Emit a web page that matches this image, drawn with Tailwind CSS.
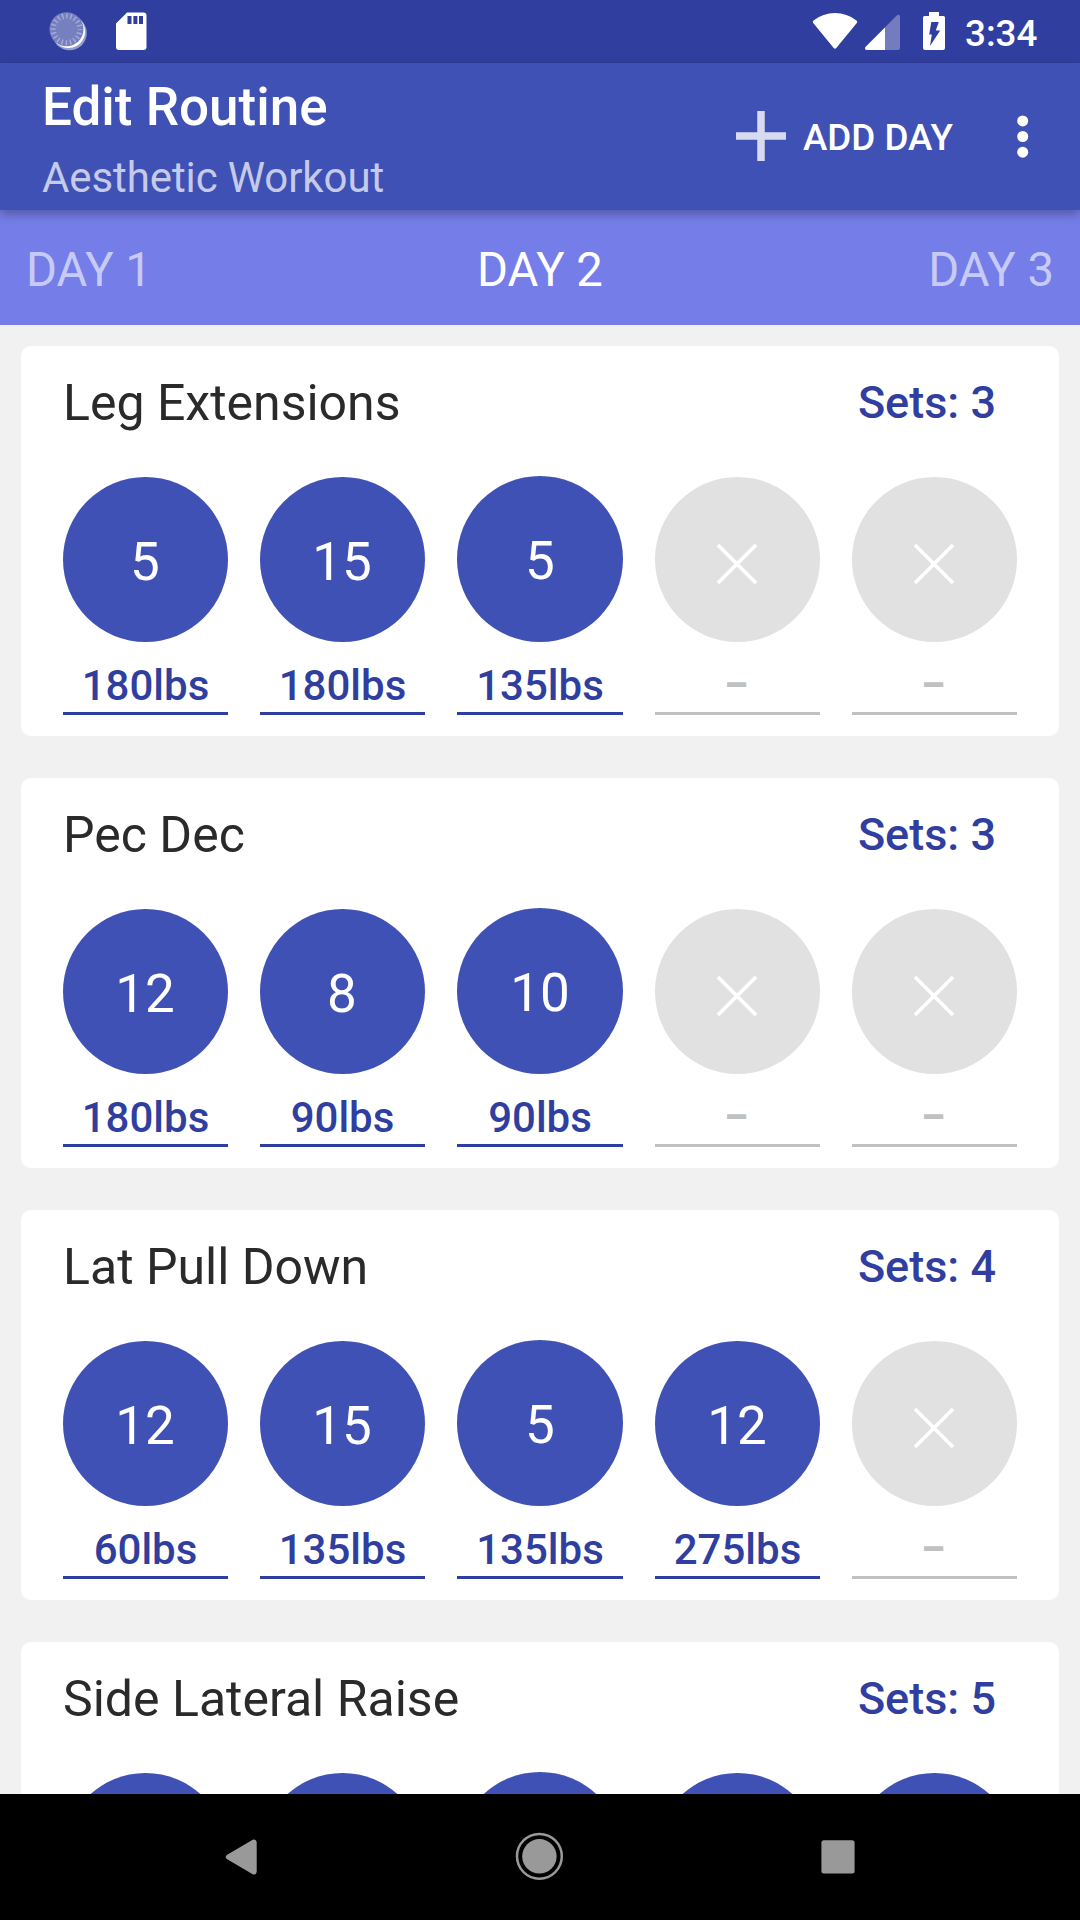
<!DOCTYPE html>
<html lang="en">
<head>
<meta charset="utf-8">
<title>Edit Routine</title>
<script src="https://cdn.jsdelivr.net/npm/@tailwindcss/browser@4"></script>
</head>
<body class="font-['Roboto',sans-serif]">
<div class="w-[1080px] h-[1920px] flex flex-col overflow-hidden bg-[#f1f1f1]">
  <!-- Status bar -->
  <div class="h-[63px] shrink-0 bg-[#303f9f] flex items-start justify-between pr-[41px] text-white">
    <svg class="w-[160px] h-[63px]" viewBox="0 0 160 63">
      <circle cx="69.500" cy="33" r="17.300" fill="#fff" fill-opacity=".5"/>
      <circle cx="68.500" cy="31.500" r="16.600" fill="#fff"/>
      <circle cx="66.500" cy="29.300" r="17" fill="#7680bf"/>
      <circle cx="66.500" cy="29.300" r="13.300" fill="none" stroke="#a5acd6" stroke-width="5.200" stroke-dasharray="1.400 2.778" stroke-dashoffset=".7"/>
      <path d="M127 12.500h16.500a3 3 0 0 1 3 3V47a3 3 0 0 1-3 3H119a3 3 0 0 1-3-3V23.500z" fill="#fff"/>
      <path d="M127.500 16h4v8h-4zM133.400 16h4v8h-4zM139 16h4v8h-4z" fill="#303f9f"/>
    </svg>
    <div class="flex items-start">
      <svg class="w-[140px] h-[63px]" viewBox="800 0 140 63" overflow="visible">
        <path d="M813.500 20.500Q823 13 835 13T856.500 20.500Q857.800 21.700 856.800 23L836.300 48Q835 49.600 833.700 48L813.200 23Q812.200 21.700 813.500 20.500z" fill="#fff"/>
        <path d="M866 46.500 896.500 15.700Q900 13.500 900 17V48a2 2 0 0 1-2 2H867q-3.500-.5-1-3.500z" fill="#fff" fill-opacity=".32"/>
        <path d="M865.500 47 885 27.500V50H867q-3-.5-1.500-3z" fill="#fff"/>
        <path d="M929 12h10v4h4.500a1.500 1.500 0 0 1 1.500 1.500V48a2 2 0 0 1-2 2H925a2 2 0 0 1-2-2V17.500a1.500 1.500 0 0 1 1.500-1.500H929z" fill="#fff"/>
        <path d="M931.300 22H938.800L935.800 30.500H940.200L930 46L931.800 34.500H929.200z" fill="#303f9f"/>
      </svg>
      <div class="ml-[25px] w-[74px] pt-[13px] text-[36.75px] leading-[42px] font-medium">3:34</div>
    </div>
  </div>

  <!-- App bar -->
  <div class="relative z-10 h-[147px] shrink-0 bg-[#3f51b5] shadow-[0_4px_10px_rgba(0,0,0,0.3)] flex">
    <div class="pl-[42px] pt-[14px] w-[736px]">
      <div class="text-[53px] leading-[60px] font-medium text-white">Edit Routine</div>
      <div class="mt-[16px] text-[42px] leading-[50px] tracking-[-0.1px] text-[#c5cae9]">Aesthetic Workout</div>
    </div>
    <div class="flex items-center pb-px text-white">
      <svg class="w-[50px] h-[50px]" viewBox="0 0 50 50"><path d="M0 25h50M25 0v50" stroke="#d8dbf0" stroke-width="7.500"/></svg>
    </div>
    <div class="ml-[17px] pt-[52px] text-[36.750px] leading-[46px] font-medium text-white">ADD DAY</div>
    <svg class="ml-auto mr-[51px] mt-[51px] w-[12px] h-[45px]" viewBox="0 0 12 45" fill="#fff"><circle cx="5.700" cy="6.900" r="5.500"/><circle cx="5.700" cy="22.500" r="5.500"/><circle cx="5.700" cy="38.200" r="5.500"/></svg>
  </div>

  <!-- Day tabs -->
  <div class="h-[115px] shrink-0 bg-[#757de8] grid grid-cols-3 items-center px-[26px] pt-1 text-[47.25px] leading-[56px] text-white/60">
    <div>DAY 1</div>
    <div class="text-center text-white">DAY 2</div>
    <div class="text-right">DAY 3</div>
  </div>

  <!-- Exercises -->
  <div id="list" class="flex-1 min-h-0 overflow-hidden px-[21px] pt-[21px] flex flex-col gap-[42px]"></div>

  <!-- Navigation bar -->
  <div class="h-[126px] shrink-0 bg-black">
    <svg class="w-full h-full" viewBox="0 1794 1080 126" fill="#999">
      <path d="M256.700 1842.500V1872q-.7 3.500-4 2.200L226.800 1859q-2.200-2 0-4L252.700 1839.800q3.300-1.300 4 2.200z"/>
      <circle cx="539.400" cy="1856.300" r="17.200"/>
      <circle cx="539.400" cy="1856.300" r="22.400" fill="none" stroke="#999" stroke-width="2.500"/>
      <rect x="821.400" y="1840.300" width="33.200" height="33.200" rx="2.500"/>
    </svg>
  </div>
</div>

<script>
const exercises = [
  { name: 'Leg Extensions', sets: [[5, 180], [15, 180], [5, 135]] },
  { name: 'Pec Dec', sets: [[12, 180], [8, 90], [10, 90]] },
  { name: 'Lat Pull Down', sets: [[12, 60], [15, 135], [5, 135], [12, 275]] },
  { name: 'Side Lateral Raise', sets: [['', ''], ['', ''], ['', ''], ['', ''], ['', '']] },
];
const column = (set, i) => {
  const size = i === 2 ? 'w-[166px] h-[166px] pt-[3px]' : 'w-[165px] h-[165px] pt-[4px] pr-px';
  const width = i === 2 ? 'w-[166px]' : 'w-[165px]';
  return set
    ? `<div class="${width}">
        <div class="${size} rounded-full bg-[#3f51b5] text-white text-[53px] leading-[60px] flex items-center justify-center">${set[0]}</div>
        <div class="h-[73px] border-b-3 border-[#303f9f] pt-[19px] text-center text-[42px] leading-[50px] font-medium text-[#303f9f]">${set[1] ? set[1] + 'lbs' : ''}</div>
      </div>`
    : `<div class="${width}">
        <div class="w-[165px] h-[165px] rounded-full bg-[#e1e1e1] flex items-center justify-center pt-[8px] pr-[2px]"><svg class="w-[42px] h-[42px]" viewBox="0 0 42 42"><path d="M2 2 40 40M40 2 2 40" stroke="#fff" stroke-width="3.800"/></svg></div>
        <div class="h-[73px] border-b-3 border-[#c1c1c1] pt-[19px] pr-[2px] text-center text-[42px] leading-[50px] font-bold text-[#c1c1c1]"><span class="inline-block scale-x-90">–</span></div>
      </div>`;
};
document.getElementById('list').innerHTML = exercises.map(e => `
  <div class="h-[390px] shrink-0 rounded-[10px] bg-white px-[42px]">
    <div class="h-[114px] flex items-center justify-between pr-[21px]">
      <div class="text-[50px] leading-[60px] text-[#2a2a2a]">${e.name}</div>
      <div class="text-[45px] leading-[60px] font-medium text-[#303f9f]">Sets: ${e.sets.length}</div>
    </div>
    <div class="mt-[16px] flex items-end justify-between">${[0, 1, 2, 3, 4].map(i => column(e.sets[i], i)).join('')}</div>
  </div>`).join('');
</script>
</body>
</html>
